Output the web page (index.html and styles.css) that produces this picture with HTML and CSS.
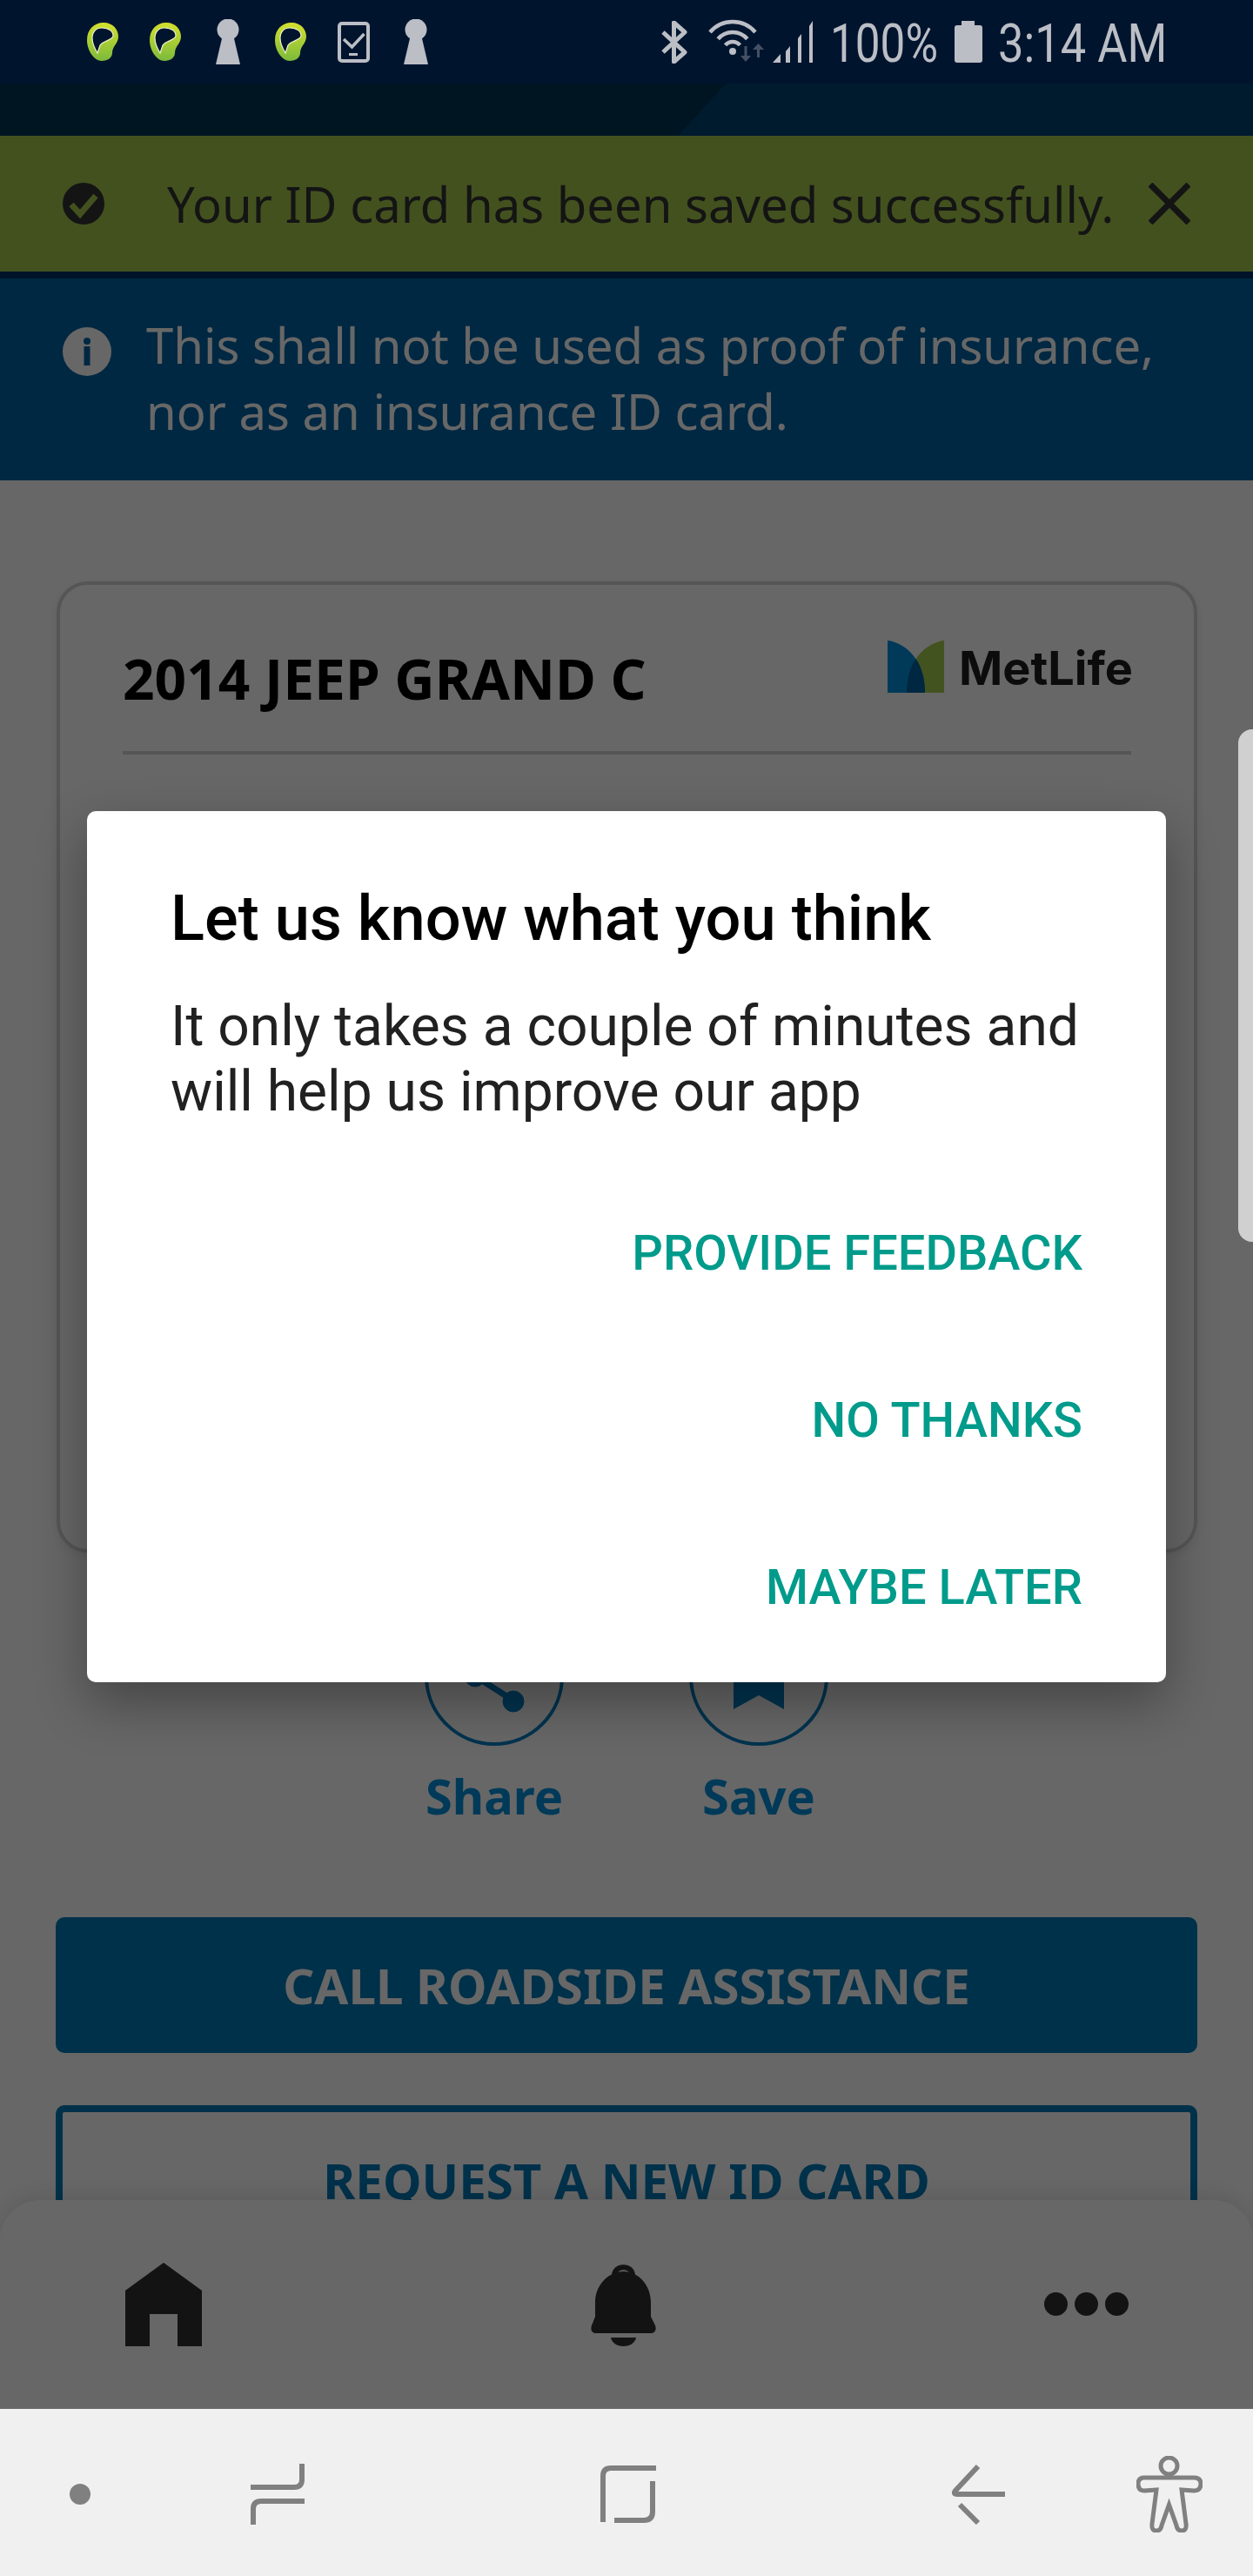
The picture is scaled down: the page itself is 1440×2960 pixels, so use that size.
FILE: index.html
```html
<!DOCTYPE html>
<html>
<head>
  <title>ID Card</title>
  <link rel="stylesheet" href="styles.css">
</head>
<body>
  <svg class="defs" width="0" height="0">
    <defs>
      <linearGradient id="leafGrad" x1="0.5" y1="0" x2="0.5" y2="1">
        <stop offset="0" stop-color="#d4e02c"/>
        <stop offset="1" stop-color="#7cba3c"/>
      </linearGradient>
      <symbol id="leaf" viewBox="0 0 36 44">
        <path fill="url(#leafGrad)" d="M19 0C30 0 36 8 36 16C36 24 29 27 29 35C29 40 24 44 17 44C8 44 0 32 0 20C0 8 8 0 19 0Z"/>
        <path fill="#00142e" stroke="#eef3cf" stroke-width="1.200" d="M17 6C25 6 30 10 30 15C30 20 18 21 15 26L12 35C9 30 6 24 6 18C6 11 10 6 17 6Z"/>
      </symbol>
      <symbol id="keyhole" viewBox="0 0 28 52">
        <circle cx="14" cy="12" r="12.500" fill="#bbbec5"/>
        <path fill="#bbbec5" d="M8 18H20L28 52H0Z"/>
      </symbol>
    </defs>
  </svg>

  <div class="statusbar">
    <div class="sb-left">
      <span class="sb-cell"><svg width="36" height="44"><use href="#leaf"/></svg></span>
      <span class="sb-cell"><svg width="36" height="44"><use href="#leaf"/></svg></span>
      <span class="sb-cell"><svg width="28" height="52"><use href="#keyhole"/></svg></span>
      <span class="sb-cell"><svg width="36" height="44"><use href="#leaf"/></svg></span>
      <span class="sb-cell">
        <svg width="37" height="47" viewBox="0 0 37 47" fill="none" stroke="#bbbec5">
          <rect x="2" y="2" width="33" height="43" rx="3" stroke-width="4"/>
          <path d="M7 20L16.500 29L30.500 14" stroke-width="3.500"/>
          <path d="M13 37.500H23" stroke-width="3"/>
        </svg>
      </span>
      <span class="sb-cell"><svg width="28" height="52"><use href="#keyhole"/></svg></span>
    </div>
    <div class="sb-right">
      <svg class="sb-bt" width="31" height="49" viewBox="0 0 31 49" fill="none" stroke="#bbbec5" stroke-width="5" stroke-linejoin="round">
        <path d="M3 13L28 36L15.500 47V2L28 13L3 36"/>
      </svg>
      <svg class="sb-net" width="120" height="52" viewBox="0 0 120 52">
        <g fill="none" stroke="#bbbec5" stroke-width="4.500">
          <path d="M2 15A34 34 0 0 1 54 15"/>
          <path d="M11.200 22.800A22 22 0 0 1 44.800 22.800"/>
          <path d="M19.600 29.900A11 11 0 0 1 36.400 29.900"/>
        </g>
        <circle cx="28" cy="37" r="4" fill="#bbbec5"/>
        <path fill="#465064" d="M41.500 31H44.500V42H49L43 49L37 42H41.500Z"/>
        <path fill="#465064" d="M56 44H59V35H64L57.500 28L51 35H56Z"/>
        <path fill="#bbbec5" d="M74 50L83 40V50ZM89 37L94 31V50H89ZM103 22L107 17V50H103ZM116 8L120 2V50H116Z"/>
      </svg>
      <span class="sb-text sb-pct">100%</span>
      <svg class="sb-batt" width="32" height="48" viewBox="0 0 32 48">
        <path fill="#bbbec5" d="M8 0H23V5H29Q32 5 32 8V45Q32 48 29 48H3Q0 48 0 45V8Q0 5 3 5H8Z"/>
      </svg>
      <span class="sb-text sb-time">3:14 AM</span>
    </div>
  </div>

  <div class="app">
    <div class="header"></div>

    <div class="toast">
      <svg class="toast-check" width="48" height="48" viewBox="0 0 48 48">
        <circle cx="24" cy="24" r="24" fill="#333"/>
        <path d="M10 25L20 36L38 15" fill="none" stroke="#a5c84d" stroke-width="7"/>
      </svg>
      <span class="toast-text">Your ID card has been saved successfully.</span>
      <svg class="toast-close" width="48" height="48" viewBox="0 0 48 48" stroke="#333" stroke-width="7">
        <path d="M2 2L46 46M46 2L2 46"/>
      </svg>
    </div>

    <div class="notice">
      <svg class="notice-icon" width="56" height="56" viewBox="0 0 56 56">
        <circle cx="28" cy="28" r="28" fill="#fff"/>
        <circle cx="28" cy="16" r="4" fill="#0063a3"/>
        <rect x="24.500" y="22" width="7" height="22" fill="#0063a3"/>
      </svg>
      <p class="notice-text">This shall not be used as proof of insurance,<br>nor as an insurance ID card.</p>
    </div>

    <div class="content">
      <div class="card">
        <div class="card-head">
          <h2 class="card-title">2014 JEEP GRAND C</h2>
          <div class="brand">
            <svg width="65" height="60" viewBox="0 0 65 60">
              <path fill="#a5cd4f" d="M65 0C47 2 22 20 22 60H65Z"/>
              <path fill="#0090da" d="M0 0C18 2 43 20 43 60H0Z"/>
              <path fill="#0061a0" d="M32.500 21C26 30 22 44 22 60H43C43 44 39 30 32.500 21Z"/>
            </svg>
            <span class="brand-name">MetLife</span>
          </div>
        </div>
      </div>

      <div class="actions">
        <div class="action">
          <div class="action-circle">
            <svg width="80" height="100" viewBox="0 0 80 100" fill="#007fc4" stroke="#007fc4">
              <path d="M62 22L18 50L62 78" fill="none" stroke-width="7"/>
              <circle cx="18" cy="50" r="12"/>
              <circle cx="62" cy="21" r="12"/>
              <circle cx="62" cy="79" r="12"/>
            </svg>
          </div>
          <span class="action-label">Share</span>
        </div>
        <div class="action">
          <div class="action-circle">
            <svg width="58" height="76" viewBox="0 0 58 76" fill="#007fc4">
              <path d="M0 0H58V76L29 60L0 76Z"/>
            </svg>
          </div>
          <span class="action-label">Save</span>
        </div>
      </div>

      <div class="btn btn-solid">CALL ROADSIDE ASSISTANCE</div>
      <div class="btn btn-outline">REQUEST A NEW ID CARD</div>
    </div>

    <div class="tabbar">
      <svg class="tab-home" width="88" height="96" viewBox="0 0 88 96" fill="#2f2f2f">
        <path d="M44 0L88 32V96H60V59H28V96H0V32Z"/>
      </svg>
      <svg class="tab-bell" width="75" height="96" viewBox="0 0 75 96" fill="#2f2f2f">
        <path d="M27 15C27 2 48 2 48 15" fill="none" stroke="#2f2f2f" stroke-width="6"/>
        <path d="M37.500 10C53 10 69 24 69 46V62L74 72C76 78 73 81 69 81H6C2 81 -1 78 1 72L5 62V46C5 24 22 10 37.500 10Z"/>
        <path d="M23 86H52C51 92 45 96 37.500 96C30 96 24 92 23 86Z"/>
      </svg>
      <div class="tab-more">
        <span class="dot"></span><span class="dot"></span><span class="dot"></span>
      </div>
    </div>

    <div class="overlay">
      <div class="dialog">
        <h1 class="dialog-title">Let us know what you think</h1>
        <p class="dialog-body">It only takes a couple of minutes and<br>will help us improve our app</p>
        <div class="dialog-actions">
          <div class="dialog-btn">PROVIDE FEEDBACK</div>
          <div class="dialog-btn">NO THANKS</div>
          <div class="dialog-btn">MAYBE LATER</div>
        </div>
      </div>
    </div>

    <div class="scroll-thumb"></div>
  </div>

  <div class="navbar">
    <span class="nav-dot"></span>
    <svg width="64" height="72" viewBox="0 0 64 72" fill="none" stroke="#808080" stroke-width="6">
      <path d="M0 28H50Q59 28 59 19V1"/>
      <path d="M62 44H12Q3 44 3 53V71"/>
    </svg>
    <svg width="66" height="68" viewBox="0 0 66 68" fill="none" stroke="#808080" stroke-width="6">
      <path d="M5 66V13Q5 4 14 4H66"/>
      <path d="M62 19V54Q62 64 52 64H18"/>
    </svg>
    <svg width="62" height="70" viewBox="0 0 62 70" fill="none" stroke="#808080" stroke-width="6">
      <path d="M30 3L4 31Q1 35 6 35H61"/>
      <path d="M9 47L30 68"/>
    </svg>
    <svg width="76" height="88" viewBox="0 0 76 88" fill="none" stroke="#808080" stroke-width="5">
      <ellipse cx="37.500" cy="11.500" rx="9.500" ry="9.500"/>
      <path d="M9 25H66Q74 25 74 32Q74 40 66 40L52 39L57 78Q58 86 52 86Q47 86 46 80L37.500 56L29 80Q28 86 23 86Q17 86 18 78L23 39L9 40Q2 40 2 32Q2 25 9 25Z"/>
    </svg>
  </div>
</body>
</html>
```

FILE: styles.css
```css
* {
  box-sizing: border-box;
}

html, body {
  margin: 0;
  padding: 0;
}

body {
  width: 1440px;
  height: 2960px;
  overflow: hidden;
  font-family: "Noto Sans", sans-serif;
  background: #fff;
}

.defs {
  display: block;
  height: 0;
}

/* status bar stays outside the dim layer */
.statusbar {
  height: 96px;
  background: #00142e;
  display: flex;
  justify-content: space-between;
  align-items: center;
  color: #bbbec5;
  font-family: Roboto, sans-serif;
}

.sb-left {
  display: flex;
  align-items: center;
  padding-left: 82px;
}

.sb-cell {
  width: 72px;
  display: flex;
  justify-content: center;
}

.sb-right {
  display: flex;
  align-items: center;
  padding-right: 100px;
}

.sb-bt {
  margin-right: 24px;
}

.sb-net {
  margin-right: 20px;
}

.sb-batt {
  margin: 0 18px 0 19px;
}

.sb-text {
  font-size: 61px;
  line-height: 100px;
  white-space: nowrap;
  transform-origin: left center;
}

.sb-pct {
  width: 124px;
  margin-top: 4px;
  transform: scaleX(0.84);
}

.sb-time {
  width: 193px;
  margin-top: 4px;
  transform: scaleX(0.86);
}

.app {
  position: relative;
  height: 2672px;
  overflow: hidden;
  background: #003163;
}

.header {
  height: 60px;
  background: linear-gradient(132.5deg, #023454 0, #023454 55.8%, #024072 55.8%);
}

.toast {
  height: 156px;
  background: #a5c84d;
  display: flex;
  align-items: center;
  padding: 0 72px;
  color: #333;
}

.toast-text {
  font-size: 56.2px;
  line-height: 76px;
  margin-left: 72px;
  white-space: nowrap;
  flex: 1;
}

.notice {
  margin-top: 8px;
  height: 232px;
  background: #0063a3;
  display: flex;
  padding: 56px 72px 0;
  color: #fff;
}

.notice-text {
  margin: -18px 0 0 40px;
  font-size: 56.2px;
  line-height: 76px;
  white-space: nowrap;
}

.content {
  height: 2216px;
  background: #fff;
  padding: 116px 64px 0;
}

.card {
  height: 1116px;
  margin: 0 0 0 1px;
  border: 4px solid #d2d2d2;
  border-radius: 36px;
  box-shadow: 0 4px 12px rgba(0,0,0,0.08);
  padding: 0 72px;
}

.card-head {
  height: 195px;
  border-bottom: 4px solid #d2d2d2;
  display: flex;
  justify-content: space-between;
  align-items: flex-start;
  padding-top: 64px;
}

.card-title {
  margin: 0;
  font-size: 64px;
  line-height: 88px;
  font-weight: 700;
  color: #000;
  white-space: nowrap;
}

.brand {
  display: flex;
  align-items: flex-start;
  margin-right: -2px;
}

.brand-name {
  font-family: Inter, sans-serif;
  font-weight: 700;
  font-size: 54px;
  line-height: 60px;
  color: #1e1e1e;
  margin: 2px 0 0 17px;
}

.actions {
  display: flex;
  justify-content: center;
  gap: 144px;
  margin-top: 62px;
}

.action {
  width: 160px;
  display: flex;
  flex-direction: column;
  align-items: center;
}

.action-circle {
  width: 160px;
  height: 160px;
  border: 4px solid #007fc4;
  border-radius: 50%;
  display: flex;
  align-items: center;
  justify-content: center;
}

.action-label {
  margin-top: 19px;
  font-size: 56px;
  line-height: 76px;
  font-weight: 700;
  color: #0090da;
  white-space: nowrap;
}

.btn {
  height: 156px;
  border-radius: 10px;
  display: flex;
  align-items: center;
  justify-content: center;
  font-size: 56.4px;
  font-weight: 700;
  white-space: nowrap;
}

.btn-solid {
  margin-top: 102px;
  background: #007ab8;
  color: #fff;
}

.btn-outline {
  height: 172px;
  margin-top: 60px;
  border: 8px solid #007ab8;
  color: #007ab8;
}

.tabbar {
  position: absolute;
  left: 0;
  right: 0;
  bottom: 0;
  height: 240px;
  background: #fff;
  border-radius: 46px 46px 0 0;
  box-shadow: 0 -6px 24px rgba(0,0,0,0.1);
  display: grid;
  grid-template-columns: 376px 680px 384px;
  justify-items: center;
  align-items: start;
  padding-top: 72px;
}

.tab-more {
  display: flex;
  gap: 8px;
  margin-top: 34px;
}

.dot {
  width: 27px;
  height: 27px;
  border-radius: 50%;
  background: #2f2f2f;
}

.overlay {
  position: absolute;
  inset: 0;
  background: rgba(0,0,0,0.595);
  display: flex;
  align-items: center;
  justify-content: center;
}

.dialog {
  width: 1240px;
  height: 1001px;
  background: #fff;
  border-radius: 10px;
  box-shadow: 0 24px 60px rgba(0,0,0,0.33);
  padding: 80px 96px 0;
  font-family: Roboto, sans-serif;
}

.dialog-title {
  margin: 0;
  font-size: 72.2px;
  line-height: 88px;
  font-weight: 500;
  color: #000;
  white-space: nowrap;
}

.dialog-body {
  margin: 42px 0 0;
  font-size: 64.1px;
  line-height: 75px;
  color: #212121;
  white-space: nowrap;
}

.dialog-actions {
  margin-top: 52px;
}

.dialog-btn {
  height: 192px;
  display: flex;
  align-items: center;
  justify-content: flex-end;
  font-size: 56px;
  font-weight: 500;
  color: #009b8b;
}

.scroll-thumb {
  position: absolute;
  right: 0;
  top: 742px;
  width: 17px;
  height: 589px;
  background: #d0d0d0;
  border-radius: 16px 0 0 16px;
}

.navbar {
  height: 192px;
  padding-top: 3px;
  background: #f0f0f0;
  display: grid;
  grid-template-columns: 184px 272px 530px 278px 160px;
  justify-items: center;
  align-items: center;
}

.nav-dot {
  width: 24px;
  height: 24px;
  border-radius: 50%;
  background: #808080;
}
```
